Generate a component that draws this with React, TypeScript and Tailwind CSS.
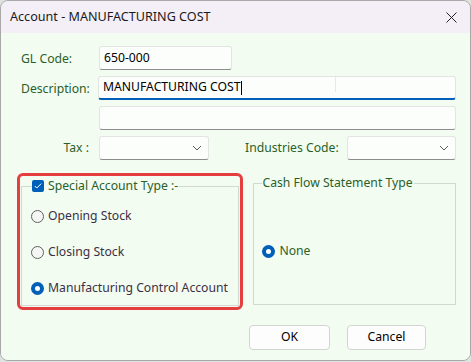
import React from 'react';

const font = { fontFamily: '"Noto Sans", "Liberation Sans", sans-serif' };

const Chevron: React.FC = () => (
  <svg width="10" height="6" viewBox="0 0 10 6" className="text-[#5a5a5a]">
    <path d="M1 1l4 4 4-4" fill="none" stroke="currentColor" strokeWidth="1" />
  </svg>
);

const Radio: React.FC<{ checked?: boolean; label: string; labelClass?: string }> = ({
  checked = false,
  label,
  labelClass = 'text-[#3b2f45]'
}) => (
  <div className="flex items-center gap-[4px] h-[16px]">
    {checked ? (
      <span className="w-[13px] h-[13px] rounded-full bg-[#005fb8] flex items-center justify-center">
        <span className="w-[5px] h-[5px] rounded-full bg-white" />
      </span>
    ) : (
      <span className="w-[13px] h-[13px] rounded-full border border-[#606060] bg-[#f4f6f4]" />
    )}
    <span className={`text-[12.2px] leading-none ${labelClass}`}>{label}</span>
  </div>
);

const Select: React.FC<{ width: string }> = ({ width }) => (
  <div
    className={`${width} h-[24px] bg-[#fcfefc] border border-[#e2e5e2] border-b-[#8c8c8c] rounded-[3px] flex items-center justify-end pr-[6px]`}
  >
    <Chevron />
  </div>
);

export default function App() {
  return (
    <div className="w-[471px] h-[362px] bg-[#dfe3df]" style={font}>
      <div className="w-[471px] h-[361px] rounded-[8px] border border-[#a8a8a8] overflow-hidden flex flex-col">
        {/* title bar */}
        <div className="h-[32px] bg-[#f4eff6] flex items-center justify-between pl-[9px] pr-[13px]">
          <span className="text-[12.6px] text-[#1a1a1a]">Account - MANUFACTURING COST</span>
          <svg width="11" height="11" viewBox="0 0 11 11">
            <path d="M0.5 0.5l10 10M10.5 0.5l-10 10" stroke="#222" strokeWidth="1" />
          </svg>
        </div>

        {/* body */}
        <div className="flex-1 bg-[#f3fcf1] pt-[13px] pl-[20px] pr-[14px] text-[12.2px]">
          <div className="flex items-center h-[24px]">
            <span className="w-[78px] text-[#2a5f2a] pt-[2px]">GL Code:</span>
            <div className="w-[133px] h-[24px] bg-[#fcfefc] border border-[#e2e5e2] border-b-[#8c8c8c] rounded-[3px] flex items-center pl-[4px] text-black">
              650-000
            </div>
          </div>

          <div className="flex items-center h-[24px] mt-[6px]">
            <span className="w-[77px] text-[#2a5f2a] pt-[2px]">Description:</span>
            <div className="relative flex-1 h-[24px] bg-[#fcfefc] border border-[#e2e5e2] border-b-2 border-b-[#005fb8] rounded-[3px] flex items-center pl-[4px] text-black">
              <span>MANUFACTURING COST</span>
              <span className="w-px h-[14px] bg-black" />
              <span className="absolute left-[236px] top-0 w-px h-[15px] bg-[#e6e9e6]" />
            </div>
          </div>

          <div className="flex items-center h-[24px] mt-[6px]">
            <span className="w-[78px]" />
            <div className="flex-1 h-[24px] bg-[#fcfefc] border border-[#e2e5e2] border-b-[#8c8c8c] rounded-[3px]" />
          </div>

          <div className="flex items-center h-[24px] mt-[6px]">
            <span className="w-[68px] text-right text-[#2a5f2a]">Tax :</span>
            <span className="w-[10px]" />
            <Select width="w-[110px]" />
            <span className="ml-[36px] w-[102px] text-[#2a5f2a]">Industries Code:</span>
            <Select width="w-[109px]" />
          </div>

          <div className="flex items-start mt-[13px] ml-[-4px]">
            {/* highlighted group */}
            <div className="w-[227px] h-[137px] border-[3px] border-[#e53e3e] rounded-[6px] pt-[3px] pl-[1px] pr-[1px] pb-[1px]">
              <fieldset className="h-[127px] border border-[#d3d8d3] px-[8px]">
                <legend className="ml-[2px] flex items-center gap-[4px] h-[14px]">
                  <span className="w-[12px] h-[12px] rounded-[2px] bg-[#005fb8] flex items-center justify-center">
                    <svg width="8" height="6" viewBox="0 0 8 6">
                      <path d="M0.8 3l2 2 4.4-4.4" fill="none" stroke="#fff" strokeWidth="1" />
                    </svg>
                  </span>
                  <span className="leading-none text-[#2a5f2a] pr-[1px]">Special Account Type :-</span>
                </legend>
                <div className="flex flex-col gap-[20px] pt-[15px] ml-[1px]">
                  <Radio label="Opening Stock" />
                  <Radio label="Closing Stock" />
                  <Radio checked label="Manufacturing Control Account" />
                </div>
              </fieldset>
            </div>

            {/* cash flow group */}
            <fieldset className="ml-[10px] mt-[3px] w-[203px] h-[129px] border border-[#d3d8d3] px-[8px]">
              <legend className="leading-[14px] text-[#2a5f2a] pr-[1px]">Cash Flow Statement Type</legend>
              <div className="pt-[53px]">
                <Radio checked label="None" labelClass="text-[#2a5f2a]" />
              </div>
            </fieldset>
          </div>

          <div className="flex gap-[17px] mt-[15px] ml-[228px]">
            <button className="w-[81px] h-[25px] bg-[#fdfdfd] border border-[#d2d4d2] rounded-[4px] text-black">
              OK
            </button>
            <button className="w-[79px] h-[25px] bg-[#fdfdfd] border border-[#d2d4d2] rounded-[4px] text-black">
              Cancel
            </button>
          </div>
        </div>
      </div>
    </div>
  );
}
